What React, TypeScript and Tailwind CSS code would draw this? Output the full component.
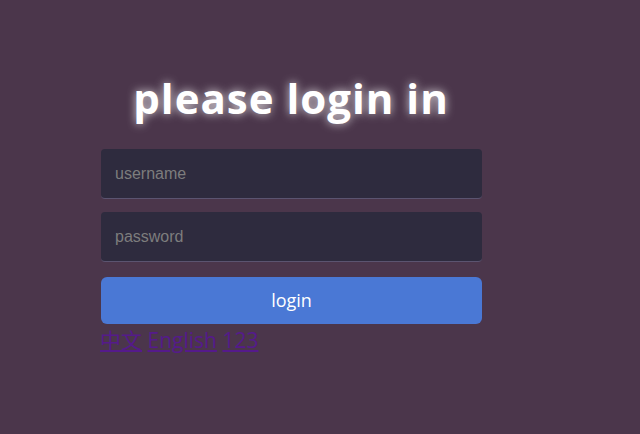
import React from "react";

export default function App() {
  return (
    <div className="w-[640px] h-[434px] bg-[#4b364b] overflow-hidden" style={{ fontFamily: '"Noto Sans", "Open Sans", sans-serif' }}>
      <div className="ml-[100px] w-[382px] pt-[74px]">
        <h1 className="text-center text-white font-bold text-[42px] tracking-[1px] leading-[48px] [text-shadow:0_0_10px_rgba(255,255,255,0.8)] [font-family:'Open_Sans',sans-serif]">
          please login in
        </h1>
        <div className="mt-[27px] flex flex-col">
          <input
            placeholder="username"
            className="h-[50px] ml-[1px] rounded-[4px] bg-[#2e2b3e] border-b border-[#5b5470] px-[14px] text-[16px] text-white placeholder:text-[#7d7d7d] outline-none [font-family:'Liberation_Sans',Arial,sans-serif]"
          />
          <input
            type="password"
            placeholder="password"
            className="mt-[13px] h-[50px] ml-[1px] rounded-[4px] bg-[#2e2b3e] border-b border-[#5b5470] px-[14px] text-[16px] text-white placeholder:text-[#7d7d7d] outline-none [font-family:'Liberation_Sans',Arial,sans-serif]"
          />
          <button className="mt-[15px] h-[47px] ml-[1px] rounded-[6px] bg-[#4a78d5] text-white text-[18px] leading-[24px] pb-[2px] [font-family:'Open_Sans',sans-serif]">
            login
          </button>
        </div>
        <div className="mt-[2px] text-[21px] leading-[28px] text-[#551a8b] [font-family:'Open_Sans','Noto_Sans_CJK_SC',sans-serif]">
          <a href="#" className="underline">中文</a>{" "}
          <a href="#" className="underline">English</a>{" "}
          <a href="#" className="underline">123</a>
        </div>
      </div>
    </div>
  );
}
